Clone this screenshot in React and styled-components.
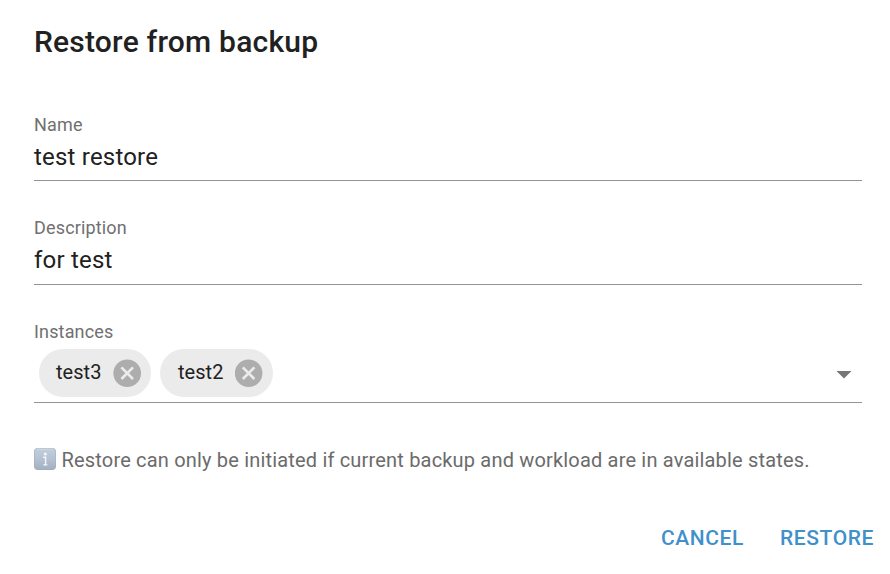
import React from 'react';
import styled, { createGlobalStyle } from 'styled-components';

const GlobalStyle = createGlobalStyle`
  * { box-sizing: border-box; }
  body { margin: 0; background: #fff; font-family: Roboto, sans-serif; }
`;

const Dialog = styled.main`
  width: 890px;
  height: 574px;
  padding: 24px 28px 0 34px;
  display: flex;
  flex-direction: column;
  background: #fff;
  overflow: hidden;
`;

const Title = styled.h1`
  margin: 0 0 55px;
  font-size: 30px;
  line-height: 36px;
  font-weight: 500;
  letter-spacing: 0.21px;
  color: #212121;
`;

const Field = styled.div`
  height: ${(p) => p.$height}px;
  margin-bottom: ${(p) => p.$gap}px;
  border-bottom: 1px solid #949494;
`;

const Label = styled.div`
  font-size: 18px;
  line-height: 20px;
  letter-spacing: 0.16px;
  color: #707070;
`;

const Value = styled.div`
  margin-top: 8px;
  font-size: 24px;
  line-height: 28px;
  letter-spacing: 0.2px;
  color: #212121;
`;

const SelectRow = styled.div`
  display: flex;
  align-items: center;
  gap: 9px;
  margin-top: 7px;
  padding: 0 10px 0 5px;
`;

const Chip = styled.span`
  display: flex;
  align-items: center;
  justify-content: space-between;
  width: ${(p) => p.$width}px;
  height: 48px;
  padding: 0 10px 0 ${(p) => p.$inset}px;
  border-radius: 24px;
  background: #ebebeb;
  color: #212121;
  font-size: 20px;
  letter-spacing: 0.05px;
`;

const ChipText = styled.span`
  padding-bottom: 2px;
`;

const Arrow = styled.svg`
  margin: 3px 0 0 auto;
`;

const Note = styled.p`
  display: flex;
  align-items: center;
  gap: 5.5px;
  height: 26px;
  margin: 0;
  font-size: 20px;
  letter-spacing: 0.18px;
  color: #6b6b6b;
  white-space: nowrap;
`;

const NoteIcon = styled.svg`
  flex: none;
  margin-top: -2px;
`;

const Actions = styled.footer`
  display: flex;
  justify-content: flex-end;
  gap: 36px;
  margin: 51px -12px 0 0;
`;

const Action = styled.button`
  padding: 0;
  border: 0;
  background: none;
  font: 500 21px/28px Roboto, sans-serif;
  letter-spacing: 0.6px;
  color: #3f90cb;
`;

function RemoveIcon({ cx = 14.2 }) {
  return (
    <svg width="28" height="28" viewBox={`${14.2 - cx} 0 28 28`}>
      <circle cx="14.2" cy="14.2" r="13.8" fill="#adadad" />
      <path d="m8.4 8.4 11.6 11.6M20 8.4 8.4 20" stroke="#ebebeb" strokeWidth="2.6" />
    </svg>
  );
}

function InfoIcon() {
  return (
    <NoteIcon width="22" height="22" viewBox="0 0 22 22">
      <defs>
        <linearGradient id="infoFill" x2="0" y2="1">
          <stop stopColor="#c1cedb" />
          <stop offset="0.5" stopColor="#b5c2d2" />
          <stop offset="1" stopColor="#a2b0c2" />
        </linearGradient>
      </defs>
      <rect width="22" height="22" rx="4" fill="#9dacbe" />
      <rect x="0.5" y="0.5" width="21" height="20.7" rx="3.6" fill="url(#infoFill)" />
      <path d="M3 1.1h16" stroke="#d4dde6" strokeWidth="0.8" />
      <circle cx="11.3" cy="6" r="1.5" fill="#f5f8fa" />
      <path d="M9.2 9.2h2.4v7.6M9.3 16.9h4" stroke="#f5f8fa" strokeWidth="1.4" fill="none" />
    </NoteIcon>
  );
}

export default function App() {
  return (
    <>
      <GlobalStyle />
      <Dialog>
        <Title>Restore from backup</Title>
        <Field $height={66} $gap={37}><Label>Name</Label><Value>test restore</Value></Field>
        <Field $height={67} $gap={37}><Label>Description</Label><Value>for test</Value></Field>
        <Field $height={81} $gap={44}>
          <Label>Instances</Label>
          <SelectRow>
            <Chip $width={112} $inset={17}><ChipText>test3</ChipText><RemoveIcon /></Chip>
            <Chip $width={113} $inset={18}><ChipText>test2</ChipText><RemoveIcon cx={13.6} /></Chip>
            <Arrow width="16" height="8" viewBox="0 0 16 8"><path d="M0.5 0h15L8 7.5z" fill="#757575" /></Arrow>
          </SelectRow>
        </Field>
        <Note><InfoIcon />Restore can only be initiated if current backup and workload are in available states.</Note>
        <Actions>
          <Action>CANCEL</Action>
          <Action>RESTORE</Action>
        </Actions>
      </Dialog>
    </>
  );
}
